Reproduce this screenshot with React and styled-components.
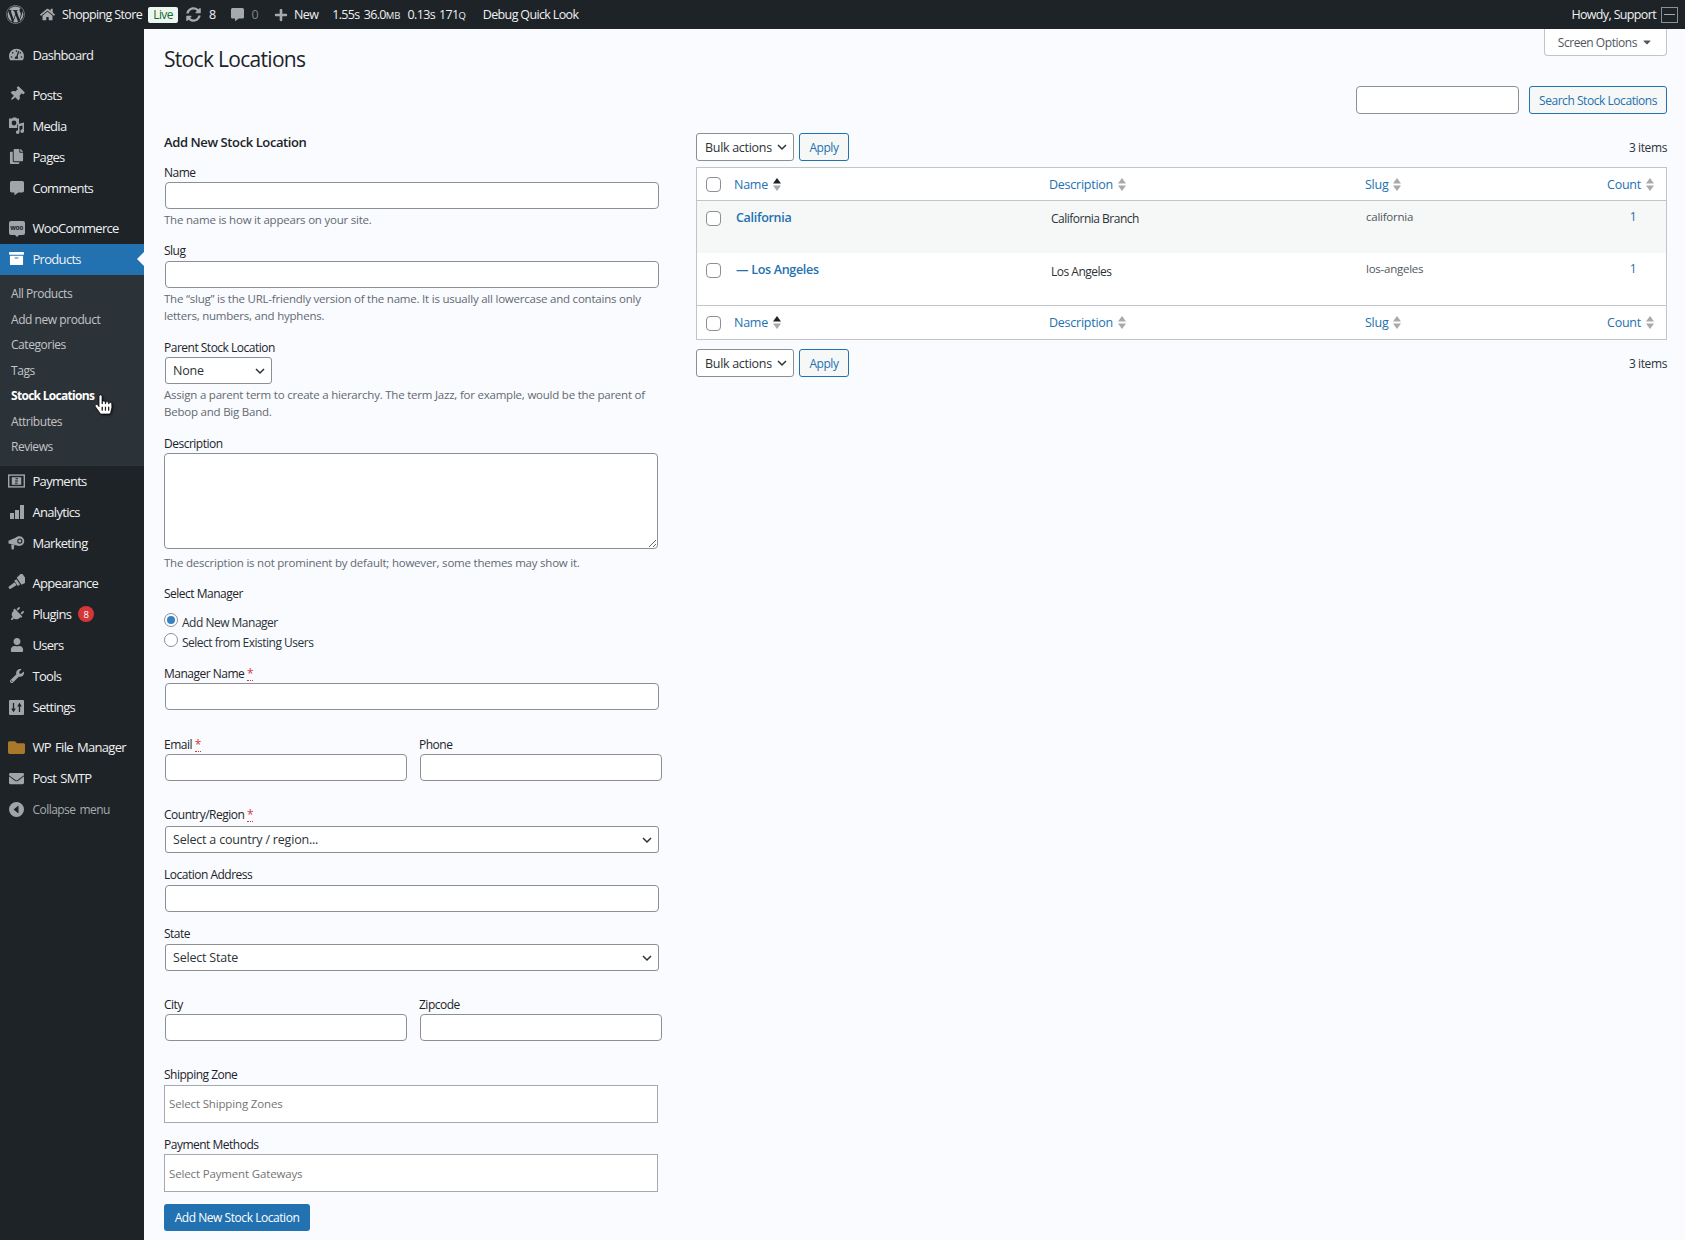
import React from 'react'
import styled, { createGlobalStyle } from 'styled-components'
import {
  FaWordpress, FaHome, FaSyncAlt, FaPlus, FaTachometerAlt, FaThumbtack,
  FaCopy, FaCommentAlt, FaArchive, FaPlug,
  FaUser, FaWrench, FaFolder, FaEnvelope, FaCaretDown, FaHandPointer,
} from 'react-icons/fa'

const FONT = `"Open Sans", "Noto Sans", sans-serif`
const CHEVRON = `url("data:image/svg+xml,%3Csvg xmlns='http://www.w3.org/2000/svg' width='12' height='12' viewBox='0 0 12 12'%3E%3Cpath d='M2 4l4 4 4-4' fill='none' stroke='%232c3338' stroke-width='1.5'/%3E%3C/svg%3E")`

const GlobalStyle = createGlobalStyle`
  html, body { margin: 0; padding: 0; background: #f9fbff; }
  body { font-family: ${FONT}; font-size: 12.5px; color: #2c3338; letter-spacing: -0.25px; }
  * { box-sizing: border-box; }
`

const Page = styled.div`
  position: relative;
  width: 1685px;
  height: 1240px;
  overflow: hidden;
  display: grid;
  grid-template-columns: 144px 1fr;
  grid-template-rows: 29px 1fr;
`

const AdminBar = styled.header`
  grid-column: 1 / 3;
  background: #1d2327;
  color: #f0f0f1;
  display: flex;
  align-items: center;
  padding: 0 7px 0 6px;
  font-size: 12.5px;
  letter-spacing: -0.65px;
  svg { display: block; color: #a7aaad; flex: none; }
`

const BarItem = styled.span`
  margin-left: ${p => p.$left || 0}px;
  color: ${p => p.$dim ? '#7d8388' : '#f0f0f1'};
  white-space: nowrap;
  small { font-size: 9.5px; letter-spacing: 0; }
`

const PushRight = styled(BarItem)`
  margin-left: auto;
`

const BarIcon = styled.span`
  margin-left: ${p => p.$left || 0}px;
  display: flex;
`

const LiveBadge = styled.span`
  margin-left: 6px;
  height: 16px;
  width: 30px;
  background: #edf7ef;
  color: #14692f;
  border-radius: 2px;
  display: flex;
  align-items: center;
  justify-content: center;
  font-size: 12px;
`

const Avatar = styled.span`
  margin-left: 5px;
  width: 17px;
  height: 16px;
  border: 1px solid #8c8f94;
  background: #1d2327;
  display: flex;
  align-items: center;
  justify-content: center;
  &::before { content: ''; width: 11px; height: 1px; background: #a7aaad; }
`

const Sidebar = styled.nav`
  background: #1d2327;
  padding-top: 11px;
`

const MenuRow = styled.div`
  position: relative;
  height: 31px;
  margin-top: ${p => p.$gap ? 9 : 0}px;
  padding: 0 0 ${p => p.$lift ? 2 : 0}px 8px;
  display: flex;
  align-items: center;
  color: ${p => p.$muted ? '#a7aaad' : '#f0f0f1'};
  background: ${p => p.$active ? '#2271b1' : 'transparent'};
  font-size: ${p => p.$muted ? 12 : 13}px;
  letter-spacing: ${p => p.$muted ? -0.55 : -0.7}px;
  word-spacing: 1.5px;
  white-space: nowrap;
  &::after {
    content: ${p => p.$active ? "''" : 'none'};
    position: absolute;
    right: 0;
    top: 8px;
    border: 7.5px solid transparent;
    border-right-color: #f9fbff;
    border-left: 0;
  }
`

const MenuIcon = styled.span`
  width: 17px;
  height: 17px;
  margin-right: 7.5px;
  flex: none;
  display: flex;
  align-items: center;
  justify-content: center;
  color: ${p => p.$color || (p.$active ? '#fff' : '#a0a5aa')};
  svg { transform: rotate(${p => p.$turn || 0}deg); }
`

const SubMenu = styled.div`
  background: #2c3338;
  padding: 6px 0;
`

const SubItem = styled.div`
  height: 25.5px;
  line-height: 25.5px;
  padding-left: 11px;
  font-size: 12px;
  letter-spacing: ${p => p.$current ? -0.7 : -0.45}px;
  color: ${p => p.$current ? '#fff' : '#c3c4c7'};
  font-weight: ${p => p.$current ? 700 : 400};
  white-space: nowrap;
`

const CountBadge = styled.span`
  margin-left: 7px;
  width: 16px;
  height: 16px;
  border-radius: 50%;
  background: #d63638;
  color: #fff;
  font-size: 9.5px;
  display: flex;
  align-items: center;
  justify-content: center;
  letter-spacing: 0;
`

const WooMark = styled.span`
  position: relative;
  width: 16px;
  height: 14px;
  border-radius: 2px;
  background: #a0a5aa;
  color: #1d2327;
  font-size: 6.5px;
  font-weight: 700;
  letter-spacing: -0.3px;
  line-height: 14px;
  text-align: center;
  &::after {
    content: '';
    position: absolute;
    left: 6px;
    bottom: -2px;
    border-top: 2px solid #a0a5aa;
    border-left: 2px solid transparent;
    border-right: 2px solid transparent;
  }
`

const Main = styled.main`
  position: relative;
  padding: 0 18px 0 20px;
  display: flex;
  flex-direction: column;
`

const ScreenTab = styled.div`
  position: absolute;
  top: 0;
  right: 18px;
  width: 123px;
  height: 27px;
  padding-right: 13px;
  background: #fff;
  border: 1px solid #c3c4c7;
  border-top: 0;
  border-radius: 0 0 4px 4px;
  color: #50575e;
  display: flex;
  align-items: center;
  justify-content: flex-end;
  gap: 4px;
  font-size: 12px;
  letter-spacing: -0.45px;
`

const Title = styled.h1`
  margin: 15px 0 0;
  font-size: 21px;
  line-height: 30px;
  font-weight: 400;
  color: #1d2327;
  letter-spacing: -0.7px;
`

const SearchRow = styled.div`
  margin-top: 12px;
  height: 28px;
  display: flex;
  justify-content: flex-end;
  gap: 10px;
`

const SearchInput = styled.input`
  width: 163px;
  height: 28px;
  border: 1px solid #8c8f94;
  border-radius: 4px;
  background: #fff;
`

const OutlineButton = styled.button`
  width: ${p => p.$w}px;
  height: 28px;
  padding: 0;
  border: 1px solid #2271b1;
  border-radius: 3px;
  background: #f6f7f7;
  color: #2271b1;
  font: inherit;
  font-size: 12px;
  letter-spacing: -0.45px;
`

const Columns = styled.div`
  margin-top: 18px;
  display: grid;
  grid-template-columns: 532px 1fr;
`

const FormColumn = styled.form`
  display: flex;
  flex-direction: column;
`

const FormHeading = styled.h2`
  margin: 0;
  font-size: 13px;
  line-height: 20px;
  font-weight: 600;
  letter-spacing: -0.4px;
  color: #1d2327;
`

const Field = styled.div`
  margin-top: ${p => p.$top || 0}px;
  display: flex;
  flex-direction: column;
`

const Label = styled.label`
  height: 18px;
  line-height: 18px;
  font-size: 12px;
  letter-spacing: -0.5px;
  color: #1d2327;
  white-space: nowrap;
  span { color: #d63638; border-bottom: 1px dotted #d63638; line-height: 12px; display: inline-block; }
`

const TextInput = styled.input`
  display: block;
  width: ${p => p.$w || 494}px;
  height: 27px;
  margin: ${p => p.$mt || 0}px 0 0 1px;
  border: 1px solid #8c8f94;
  border-radius: 4px;
  background: #fff;
`

const Select = styled.select`
  display: block;
  width: ${p => p.$w || 494}px;
  height: 27px;
  margin: ${p => p.$mt ?? 1}px 0 0 1px;
  padding: 0 24px 0 7px;
  border: 1px solid #8c8f94;
  border-radius: 3px;
  background: #fff ${CHEVRON} no-repeat right 5px center;
  appearance: none;
  color: #2c3338;
  font: inherit;
  font-size: 12.5px;
  letter-spacing: -0.2px;
`

const TextArea = styled.textarea`
  display: block;
  width: 494px;
  height: 96px;
  border: 1px solid #8c8f94;
  border-radius: 4px;
  background: #fff;
`

const Help = styled.p`
  margin: ${p => p.$top || 2}px 0 0;
  width: 490px;
  font-size: 11.5px;
  line-height: 17px;
  letter-spacing: -0.22px;
  color: #646970;
`

const RadioRow = styled.label`
  display: flex;
  height: 20px;
  font-size: 12px;
  line-height: 20px;
  letter-spacing: -0.5px;
  color: #2c3338;
`

const Radio = styled.input`
  appearance: none;
  width: 14px;
  height: 14px;
  margin: 0 4px 0 0;
  border: 1px solid #8c8f94;
  border-radius: 50%;
  background: #fff;
  display: flex;
  align-items: center;
  justify-content: center;
  &:checked::before { content: ''; width: 8px; height: 8px; border-radius: 50%; background: #3582c4; }
`

const RadioGroup = styled.div`
  margin-top: 10px;
`

const HalfRow = styled.div`
  margin-top: ${p => p.$top}px;
  display: grid;
  grid-template-columns: 255px 255px;
`

const TagBox = styled.input`
  display: block;
  width: 494px;
  height: 38px;
  margin-top: ${p => p.$mt || 0}px;
  padding: 0 4px ${p => p.$low ? 0 : 2}px;
  border: 1px solid #a7aaad;
  background: #fff;
  font: inherit;
  font-size: 11.5px;
  letter-spacing: -0.15px;
  &::placeholder { color: #757575; opacity: 1; }
`

const PrimaryButton = styled.button`
  display: block;
  margin-top: 12px;
  width: 146px;
  height: 27px;
  border: 0;
  border-radius: 3px;
  background: #2271b1;
  color: #fff;
  font: inherit;
  font-size: 12px;
  letter-spacing: -0.45px;
`

const TableColumn = styled.div`
  display: flex;
  flex-direction: column;
`

const TableNav = styled.div`
  margin-top: ${p => p.$top}px;
  height: 28px;
  display: flex;
  align-items: center;
  gap: 5px;
`

const BulkSelect = styled.select`
  width: 98px;
  height: 28px;
  padding: 0 20px 0 8px;
  border: 1px solid #8c8f94;
  border-radius: 3px;
  background: #fff ${CHEVRON} no-repeat right 5px center;
  appearance: none;
  color: #2c3338;
  font: inherit;
  font-size: 12.5px;
  letter-spacing: -0.3px;
`

const ItemCount = styled.span`
  margin-left: auto;
  font-size: 12px;
  letter-spacing: -0.4px;
  color: #2c3338;
`

const Table = styled.div`
  margin-top: 6px;
  border: 1px solid #c3c4c7;
  background: #fff;
`

const Row = styled.div`
  display: grid;
  grid-template-columns: 27px 315px 316px 1fr 74px;
  height: ${p => p.$h}px;
  background: ${p => p.$bg || '#fff'};
  border-top: ${p => p.$lineTop ? '1px solid #c3c4c7' : '0'};
  border-bottom: ${p => p.$lineBottom ? '1px solid #c3c4c7' : '0'};
`

const CheckCell = styled.div`
  padding: ${p => p.$top}px 0 0 9px;
`

const Check = styled.input`
  appearance: none;
  display: block;
  width: 15px;
  height: 15px;
  margin: 0;
  border: 1px solid #8c8f94;
  border-radius: 4px;
  background: #fff;
`

const HeadCell = styled.div`
  padding: 0 ${p => p.$right ? 12 : 10}px 0 10px;
  display: flex;
  align-items: center;
  justify-content: ${p => p.$right ? 'flex-end' : 'flex-start'};
  gap: 5px;
  color: #2271b1;
  font-size: 12.5px;
  white-space: nowrap;
`

const BodyCell = styled.div`
  padding: ${p => p.$top}px ${p => p.$right || 0}px 0 ${p => p.$right ? 0 : p.$left || 12}px;
  text-align: ${p => p.$right ? 'right' : 'left'};
  font-size: ${p => p.$small ? 11.5 : 12}px;
  line-height: 18px;
  letter-spacing: ${p => p.$small ? -0.25 : -0.5}px;
  color: ${p => p.$link ? '#2271b1' : p.$small ? '#50575e' : '#2c3338'};
`

const RowTitle = styled.a`
  color: #2271b1;
  font-weight: 600;
  font-size: 12.5px;
  letter-spacing: -0.3px;
`

const Cursor = styled.div`
  position: absolute;
  left: 94px;
  top: 395px;
  filter: drop-shadow(1px 1px 1px rgba(0, 0, 0, 0.6));
  svg { display: block; fill: #fff; stroke: #000; stroke-width: 18px; overflow: visible; }
`

const SortArrows = ({ active }) => (
  <svg width="8" height="13" viewBox="0 0 8 13">
    <path d="M4 0l4 5.5H0z" fill={active ? '#1d2327' : '#a7aaad'} />
    <path d="M4 13L0 7.5h8z" fill="#a7aaad" />
  </svg>
)

const BarsIcon = () => (
  <svg width="16" height="16" viewBox="0 0 16 16" fill="currentColor">
    <rect x="1" y="9" width="4" height="6" />
    <rect x="6" y="6" width="4" height="9" />
    <rect x="11" y="1" width="4" height="14" />
  </svg>
)

const PaymentsIcon = () => (
  <svg width="18" height="14" viewBox="0 0 18 14" fill="none">
    <rect x="0.75" y="0.75" width="16.5" height="12.5" stroke="currentColor" strokeWidth="1.5" />
    <rect x="4" y="3" width="10" height="8" fill="currentColor" />
    <rect x="8" y="4" width="2.5" height="1.2" fill="#1d2327" />
    <rect x="7.5" y="6.4" width="3" height="1.2" fill="#1d2327" />
    <rect x="7.5" y="8.8" width="2.5" height="1.2" fill="#1d2327" />
  </svg>
)

const SettingsIcon = () => (
  <svg width="15" height="15" viewBox="0 0 15 15">
    <rect width="15" height="15" rx="1" fill="currentColor" />
    <path d="M4.5 3v7M2.8 8.5l1.7 2.5 1.7-2.5M10.5 12V5M8.8 6.5l1.7-2.5 1.7 2.5" stroke="#1d2327" strokeWidth="1.3" fill="none" />
  </svg>
)

const CollapseIcon = () => (
  <svg width="15" height="15" viewBox="0 0 15 15">
    <circle cx="7.5" cy="7.5" r="7.5" fill="currentColor" />
    <path d="M9.5 3.5v8L4.5 7.5z" fill="#1d2327" />
  </svg>
)

const MediaIcon = () => (
  <svg width="17" height="17" viewBox="0 0 17 17">
    <path fill="currentColor" d="M1 1.5h3l1-1h3l1 1h2v9.5H1z" />
    <circle cx="6" cy="6" r="2.4" fill="#1d2327" />
    <path fill="#1d2327" d="M9.2 7.5h7.8v9.5H9.2z" />
    <path fill="currentColor" d="M16 5.5v8.6a1.8 1.8 0 1 1-1.5-1.7V8.5l-3 .7v5.9a1.8 1.8 0 1 1-1.5-1.7V7z" />
  </svg>
)

const MegaphoneIcon = () => (
  <svg width="18" height="16" viewBox="0 0 18 16">
    <path fill="currentColor" d="M0.5 5.5L11 1v10L0.5 8.5z" />
    <path fill="currentColor" d="M3.5 9.2l3.2.8L6 15H3.8z" />
    <circle cx="12" cy="6" r="5.2" fill="currentColor" />
    <circle cx="12.5" cy="6" r="2.8" fill="#1d2327" />
    <circle cx="12.5" cy="6" r="1.6" fill="currentColor" />
  </svg>
)

const BrushIcon = () => (
  <svg width="18" height="18" viewBox="0 0 16 16">
    <g fill="currentColor" transform="rotate(55 8 8)">
      <path d="M3 -1.5h10L12 5H4z" />
      <path d="M5 6h6v2.5H5z" />
      <path d="M6.3 9h3.4l-.4 7.5H6.7z" />
    </g>
  </svg>
)

const mainMenu = [
  { label: 'Dashboard', icon: <FaTachometerAlt size={15} /> },
  { label: 'Posts', icon: <FaThumbtack size={15} />, gap: true, turn: 45 },
  { label: 'Media', icon: <MediaIcon /> },
  { label: 'Pages', icon: <FaCopy size={15} /> },
  { label: 'Comments', icon: <FaCommentAlt size={14} /> },
  { label: 'WooCommerce', icon: <WooMark>woo</WooMark>, gap: true },
]

const subMenu = ['All Products', 'Add new product', 'Categories', 'Tags', 'Stock Locations', 'Attributes', 'Reviews']

const lowerMenu = [
  { label: 'Payments', icon: <PaymentsIcon /> },
  { label: 'Analytics', icon: <BarsIcon /> },
  { label: 'Marketing', icon: <MegaphoneIcon /> },
  { label: 'Appearance', icon: <BrushIcon />, gap: true },
  { label: 'Plugins', icon: <FaPlug size={15} />, badge: 8, turn: 45 },
  { label: 'Users', icon: <FaUser size={14} /> },
  { label: 'Tools', icon: <FaWrench size={14} /> },
  { label: 'Settings', icon: <SettingsIcon /> },
  { label: 'WP File Manager', icon: <FaFolder size={19} />, gap: true, color: '#a9782a' },
  { label: 'Post SMTP', icon: <FaEnvelope size={15} /> },
]

const HeaderRow = ({ line }) => (
  <Row $h={line === 'top' ? 34 : 33} $lineTop={line === 'top'} $lineBottom={line === 'bottom'}>
    <CheckCell $top={10 - (line === 'top' ? 0 : 1)}><Check type="checkbox" /></CheckCell>
    <HeadCell>Name <SortArrows active /></HeadCell>
    <HeadCell>Description <SortArrows /></HeadCell>
    <HeadCell>Slug <SortArrows /></HeadCell>
    <HeadCell $right>Count <SortArrows /></HeadCell>
  </Row>
)

const Actions = () => (
  <>
    <BulkSelect defaultValue="bulk"><option value="bulk">Bulk actions</option></BulkSelect>
    <OutlineButton $w={50}>Apply</OutlineButton>
    <ItemCount>3 items</ItemCount>
  </>
)

const App = () => (
  <Page>
    <GlobalStyle />
    <AdminBar>
      <FaWordpress size={19} />
      <BarIcon $left={15}><FaHome size={15} /></BarIcon>
      <BarItem $left={7}>Shopping Store</BarItem>
      <LiveBadge>Live</LiveBadge>
      <BarIcon $left={8}><FaSyncAlt size={15} /></BarIcon>
      <BarItem $left={8}>8</BarItem>
      <BarIcon $left={15}><FaCommentAlt size={13} /></BarIcon>
      <BarItem $left={8} $dim>0</BarItem>
      <BarIcon $left={16}><FaPlus size={14} /></BarIcon>
      <BarItem $left={6}>New</BarItem>
      <BarItem $left={14}>1.55s</BarItem>
      <BarItem $left={4}>36.0<small>MB</small></BarItem>
      <BarItem $left={7}>0.13s</BarItem>
      <BarItem $left={4}>171<small>Q</small></BarItem>
      <BarItem $left={17}>Debug Quick Look</BarItem>
      <PushRight>Howdy, Support</PushRight>
      <Avatar />
    </AdminBar>

    <Sidebar>
      {mainMenu.map(item => (
        <MenuRow key={item.label} $gap={item.gap} $lift>
          <MenuIcon $turn={item.turn}>{item.icon}</MenuIcon>{item.label}
        </MenuRow>
      ))}
      <MenuRow $active $lift>
        <MenuIcon $active><FaArchive size={15} /></MenuIcon>Products
      </MenuRow>
      <SubMenu>
        {subMenu.map(label => (
          <SubItem key={label} $current={label === 'Stock Locations'}>{label}</SubItem>
        ))}
      </SubMenu>
      {lowerMenu.map(item => (
        <MenuRow key={item.label} $gap={item.gap}>
          <MenuIcon $color={item.color} $turn={item.turn}>{item.icon}</MenuIcon>{item.label}
          {item.badge && <CountBadge>{item.badge}</CountBadge>}
        </MenuRow>
      ))}
      <MenuRow $muted>
        <MenuIcon><CollapseIcon /></MenuIcon>Collapse menu
      </MenuRow>
    </Sidebar>

    <Main>
      <ScreenTab>Screen Options <FaCaretDown size={12} /></ScreenTab>
      <Title>Stock Locations</Title>
      <SearchRow>
        <SearchInput />
        <OutlineButton $w={138}>Search Stock Locations</OutlineButton>
      </SearchRow>

      <Columns>
        <FormColumn>
          <FormHeading>Add New Stock Location</FormHeading>
          <Field $top={12}>
            <Label>Name</Label>
            <TextInput />
            <Help>The name is how it appears on your site.</Help>
          </Field>
          <Field $top={14}>
            <Label>Slug</Label>
            <TextInput $mt={1} />
            <Help>The “slug” is the URL-friendly version of the name. It is usually all lowercase and contains only letters, numbers, and hyphens.</Help>
          </Field>
          <Field $top={15}>
            <Label>Parent Stock Location</Label>
            <Select $w={107} $mt={0} defaultValue="none"><option value="none">None</option></Select>
            <Help>Assign a parent term to create a hierarchy. The term Jazz, for example, would be the parent of Bebop and Big Band.</Help>
          </Field>
          <Field $top={15}>
            <Label>Description</Label>
            <TextArea />
            <Help $top={5}>The description is not prominent by default; however, some themes may show it.</Help>
          </Field>
          <Field $top={14}>
            <Label>Select Manager</Label>
            <RadioGroup>
              <RadioRow><Radio type="radio" name="manager" defaultChecked />Add New Manager</RadioRow>
              <RadioRow><Radio type="radio" name="manager" />Select from Existing Users</RadioRow>
            </RadioGroup>
          </Field>
          <Field $top={12}>
            <Label>Manager Name <span>*</span></Label>
            <TextInput />
          </Field>
          <HalfRow $top={26}>
            <Field>
              <Label>Email <span>*</span></Label>
              <TextInput $w={242} />
            </Field>
            <Field>
              <Label>Phone</Label>
              <TextInput $w={242} />
            </Field>
          </HalfRow>
          <Field $top={25}>
            <Label>Country/Region <span>*</span></Label>
            <Select $mt={2} defaultValue="none"><option value="none">Select a country / region...</option></Select>
          </Field>
          <Field $top={13}>
            <Label>Location Address</Label>
            <TextInput $mt={1} />
          </Field>
          <Field $top={13}>
            <Label>State</Label>
            <Select defaultValue="none"><option value="none">Select State</option></Select>
          </Field>
          <HalfRow $top={25}>
            <Field>
              <Label>City</Label>
              <TextInput $w={242} />
            </Field>
            <Field>
              <Label>Zipcode</Label>
              <TextInput $w={242} />
            </Field>
          </HalfRow>
          <Field $top={25}>
            <Label>Shipping Zone</Label>
            <TagBox $mt={1} placeholder="Select Shipping Zones" />
          </Field>
          <Field $top={13}>
            <Label>Payment Methods</Label>
            <TagBox $low placeholder="Select Payment Gateways" />
          </Field>
          <PrimaryButton type="button">Add New Stock Location</PrimaryButton>
        </FormColumn>

        <TableColumn>
          <TableNav $top={1}><Actions /></TableNav>
          <Table>
            <HeaderRow line="bottom" />
            <Row $h={52} $bg="#f6f7f7">
              <CheckCell $top={10}><Check type="checkbox" /></CheckCell>
              <BodyCell $top={8}><RowTitle>California</RowTitle></BodyCell>
              <BodyCell $top={9}>California Branch</BodyCell>
              <BodyCell $top={7} $small $left={11}>california</BodyCell>
              <BodyCell $top={7} $right={30} $link>1</BodyCell>
            </Row>
            <Row $h={52}>
              <CheckCell $top={10}><Check type="checkbox" /></CheckCell>
              <BodyCell $top={8}><RowTitle>— Los Angeles</RowTitle></BodyCell>
              <BodyCell $top={10}>Los Angeles</BodyCell>
              <BodyCell $top={7} $small $left={11}>los-angeles</BodyCell>
              <BodyCell $top={7} $right={30} $link>1</BodyCell>
            </Row>
            <HeaderRow line="top" />
          </Table>
          <TableNav $top={9}><Actions /></TableNav>
        </TableColumn>
      </Columns>
    </Main>

    <Cursor><FaHandPointer size={19} /></Cursor>
  </Page>
)

export default App
